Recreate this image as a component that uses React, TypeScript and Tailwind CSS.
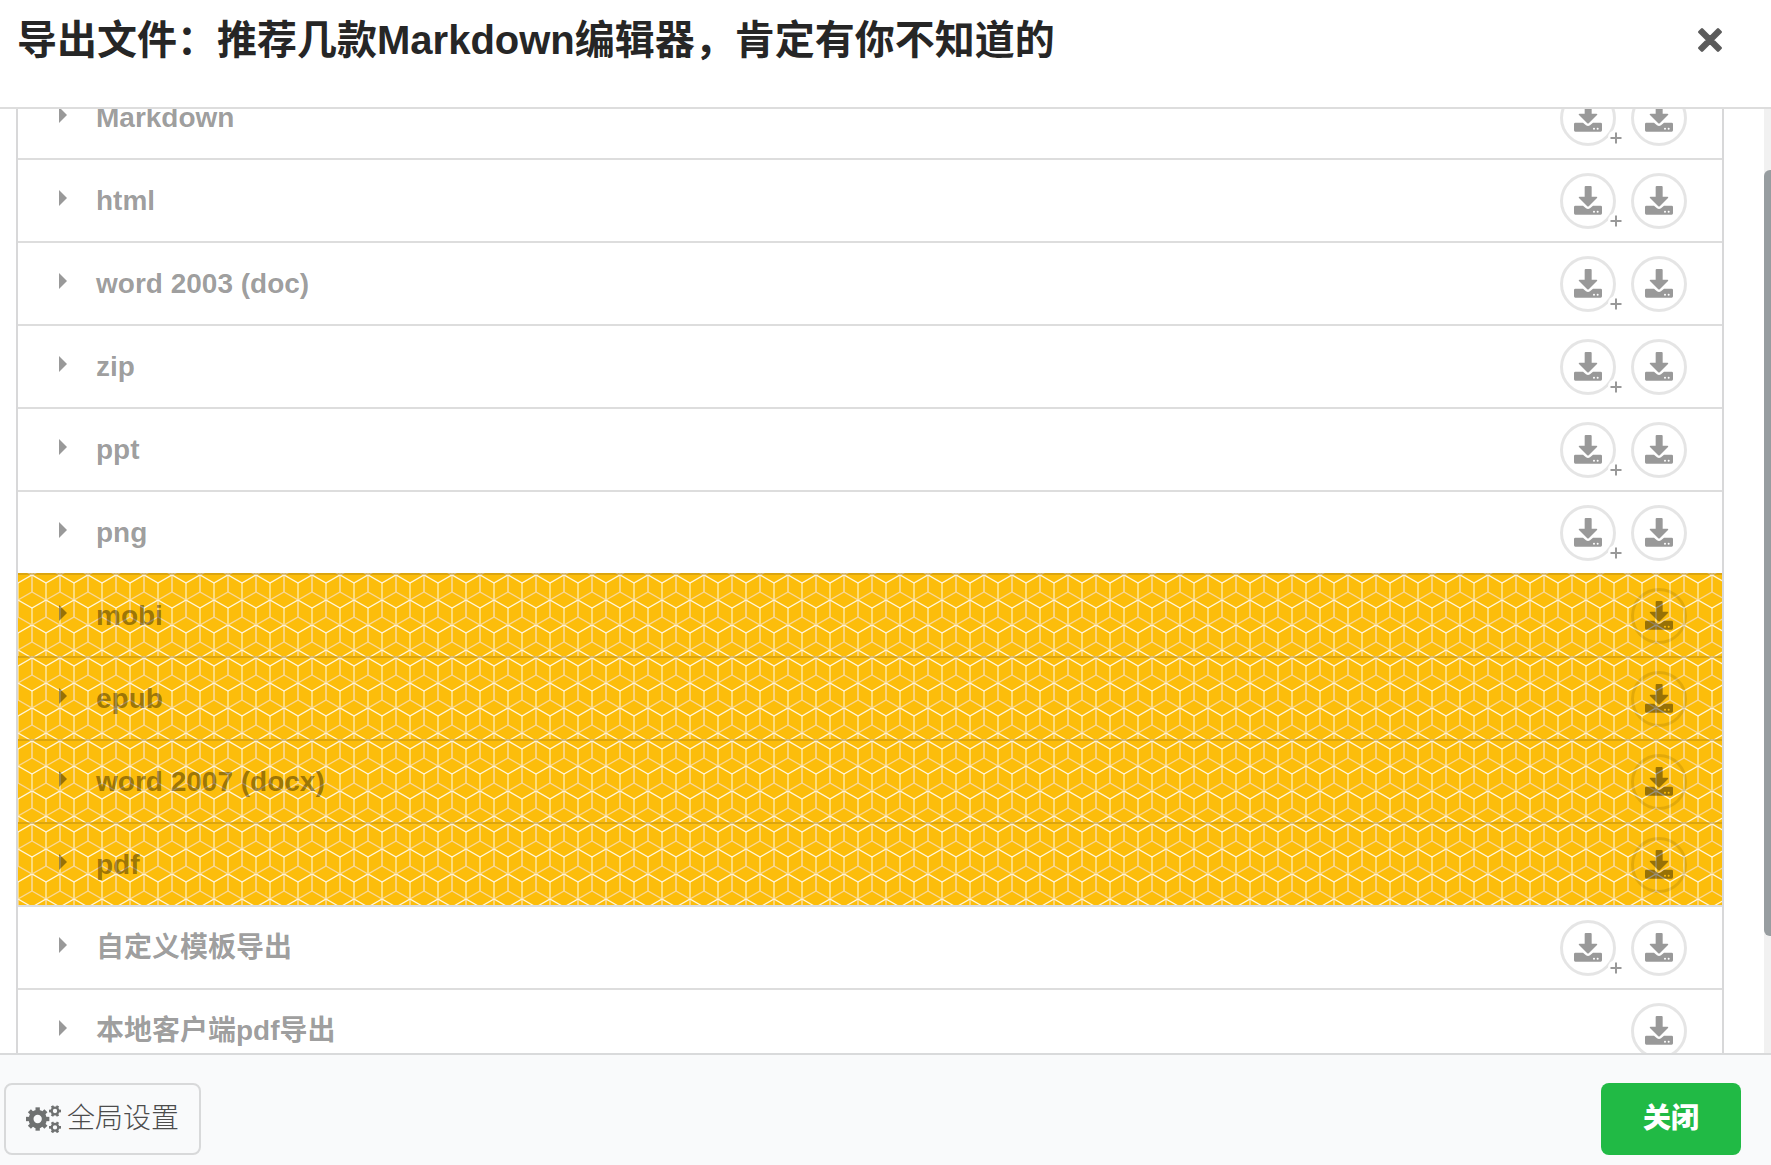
type Row = { label: string; plus?: boolean; gold?: boolean };

const rows: Row[] = [
  { label: "Markdown", plus: true },
  { label: "html", plus: true },
  { label: "word 2003 (doc)", plus: true },
  { label: "zip", plus: true },
  { label: "ppt", plus: true },
  { label: "png", plus: true },
  { label: "mobi", gold: true },
  { label: "epub", gold: true },
  { label: "word 2007 (docx)", gold: true },
  { label: "pdf", gold: true },
  { label: "自定义模板导出", plus: true },
  { label: "本地客户端pdf导出" },
];

function DownloadIcon() {
  return (
    <svg className="h-[29px] w-7" viewBox="0 0 84 87" fill="currentColor">
      <path d="M35 0H50Q53 0 53 3V32H67Q72 32 69 36L45 60Q42 63 39 60L15 36Q12 32 17 32H32V3Q32 0 35 0Z" />
      <path
        fillRule="evenodd"
        d="M4 59H27L36 67Q42 71 48 67L57 59H80Q84 59 84 63V82Q84 86 80 86H4Q0 86 0 82V63Q0 59 4 59ZM60 74Q57 74 57 77T60 80T63 77T60 74ZM71 74Q68 74 68 77T71 80T74 77T71 74Z"
      />
    </svg>
  );
}

type GearProps = { x: number; y: number; outer: number; ring: number; ringWidth: number; tooth: number; angles: number[] };

function Gear({ x, y, outer, ring, ringWidth, tooth, angles }: GearProps) {
  return (
    <g transform={`translate(${x} ${y})`} fill="none" stroke="currentColor">
      <circle r={ring} strokeWidth={ringWidth} />
      {angles.map((a) => (
        <path key={a} d={`M${ring} 0H${outer}`} strokeWidth={tooth} transform={`rotate(${a})`} />
      ))}
    </g>
  );
}

function CogsIcon() {
  const six = [0, 60, 120, 180, 240, 300];
  const eight = [0, 45, 90, 135, 180, 225, 270, 315];
  return (
    <svg className="h-7 w-[35px]" viewBox="0 0 105 84">
      <Gear x={35} y={42} outer={35} ring={20} ringWidth={15} tooth={13} angles={eight} />
      <Gear x={87} y={18} outer={18} ring={10} ringWidth={7} tooth={8} angles={six} />
      <Gear x={87} y={67} outer={18} ring={10} ringWidth={7} tooth={8} angles={six} />
    </svg>
  );
}

function CircleButton({ plus }: { plus?: boolean }) {
  return (
    <button className="relative flex size-14 items-center justify-center rounded-full border-[3px] border-black/10 text-black/40">
      <DownloadIcon />
      {plus && (
        <svg className="absolute -right-[11px] -bottom-[3px] size-4" viewBox="0 0 16 16">
          <circle cx="8" cy="8" r="8" fill="#fff" />
          <path d="M2.5 8H13.5M8 2.5V13.5" stroke="#999" strokeWidth="2" fill="none" />
        </svg>
      )}
    </button>
  );
}

function CubePattern({ id }: { id: string }) {
  return (
    <svg className="absolute -top-0.5 left-0 h-[83px] w-full">
      <defs>
        <pattern id={id} width="28" height="50" y="2" patternUnits="userSpaceOnUse">
          <g fill="none">
            <path stroke="#f9d588" strokeWidth="1.8" d="M14 0V17M0 25V42M28 25V42" />
            <path stroke="#fddf85" strokeWidth="1.8" d="M14 33V50M0 8V25M28 8V25" />
            <path stroke="#f8d797" strokeWidth="1.4" d="M0 25L14 17L28 25M-14 50L0 42L14 50L28 42L42 50" />
            <path stroke="#fff6dc" strokeWidth="1.4" d="M0 25L14 33L28 25M-14 0L0 8L14 0L28 8L42 0" />
          </g>
        </pattern>
      </defs>
      <rect width="100%" height="100%" fill="#fcbd0b" />
      <rect width="100%" height="100%" fill={`url(#${id})`} />
      <rect width="100%" height="2" fill="#222426" fillOpacity="0.15" />
    </svg>
  );
}

export default function App() {
  return (
    <div className="flex h-[1165px] w-[1771px] flex-col overflow-hidden bg-white font-['Liberation_Sans','Noto_Sans_CJK_SC',sans-serif]">
      <header className="flex h-[109px] shrink-0 items-start justify-between border-b-2 border-[#dddddd] pr-[49px] pl-[17px]">
        <h1 className="mt-[10px] text-[40px] leading-[60px] font-bold whitespace-nowrap text-[#262626]">
          导出文件：推荐几款Markdown编辑器，肯定有你不知道的
        </h1>
        <button className="mt-7">
          <svg className="size-6" viewBox="0 0 24 24">
            <path
              d="M4 1.5L12 9.5L20 1.5L22.5 4L14.5 12L22.5 20L20 22.5L12 14.5L4 22.5L1.5 20L9.5 12L1.5 4Z"
              fill="#5b5b5b"
              stroke="#5b5b5b"
              strokeWidth="2.8"
              strokeLinejoin="round"
            />
          </svg>
        </button>
      </header>

      <main className="flex min-h-0 flex-1 justify-between overflow-hidden pl-4">
        <div className="-mt-[34px] h-[1000px] w-[1708px] shrink-0 border-x-2 border-[#d8d8d9]">
          {rows.map((row, i) => (
            <div
              key={row.label}
              className={
                row.gold
                  ? "relative h-[83px] border-t-2 border-transparent"
                  : "relative h-[83px] border-t-2 border-[#dddddd]"
              }
            >
              {row.gold && <CubePattern id={`cube-${i}`} />}
              <div className="relative flex h-[81px] items-center pr-[35px] pl-[41px] text-black/40">
                <svg className="mb-[5px] h-4 w-2" viewBox="0 0 8 16" fill="currentColor">
                  <path d="M0 0L8 8L0 16Z" />
                </svg>
                <span className="ml-[29px] text-[28px] leading-10 font-bold">{row.label}</span>
                <div className="ml-auto flex gap-[15px]">
                  {row.plus && <CircleButton plus />}
                  <CircleButton />
                </div>
              </div>
            </div>
          ))}
        </div>
        <div className="w-[7px] overflow-hidden bg-[#f1f1f1]">
          <div className="mt-[61px] h-[766px] w-3 rounded-[6px] bg-[#979da0]" />
        </div>
      </main>

      <footer className="flex h-[112px] shrink-0 items-start justify-between border-t-2 border-[#d9dadb] bg-[#f9fafb] pt-7 pr-[30px] pl-1">
        <button className="flex h-[72px] w-[197px] items-center rounded-[8px] border-2 border-[#d8d9da] pl-5 text-[28px] text-[#6f7171]">
          <CogsIcon />
          <span className="ml-[6px] font-light text-[#4c4c4c]">全局设置</span>
        </button>
        <button className="h-[72px] w-[140px] rounded-[8px] bg-[#21ba45] text-[28px] font-black text-white">关闭</button>
      </footer>
    </div>
  );
}
